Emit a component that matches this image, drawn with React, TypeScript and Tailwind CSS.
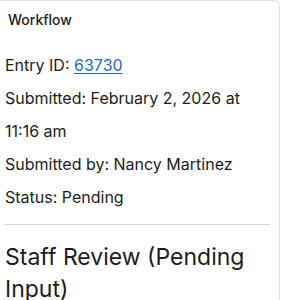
export default function App() {
  return (
    <div className="w-[282px] h-[300px] overflow-hidden bg-white font-['Inter',sans-serif] text-[#1c1c1c]">
      <div className="mr-[2px] h-[320px] rounded-tr-md border-t border-r border-[#e2e2e2]">
        {/* Header */}
        <div className="pl-[8px] pt-[9px] text-[14px] leading-[20px] font-medium">Workflow</div>

        {/* Entry details */}
        <div className="mt-[19px] pl-[5px] pr-[9px] text-[16px] leading-[33px]">
          <p>
            Entry ID:{' '}
            <a href="#" className="text-[#1f66d6] underline underline-offset-2">
              63730
            </a>
          </p>
          <p>Submitted: February 2, 2026 at 11:16 am</p>
          <p>Submitted by: Nancy Martinez</p>
          <p>Status: Pending</p>
          <hr className="mt-[10px] border-t border-[#d4d4d4]" />
          <h2 className="mt-[16px] text-[23px] leading-[32px]">Staff Review (Pending Input)</h2>
        </div>
      </div>
    </div>
  )
}
